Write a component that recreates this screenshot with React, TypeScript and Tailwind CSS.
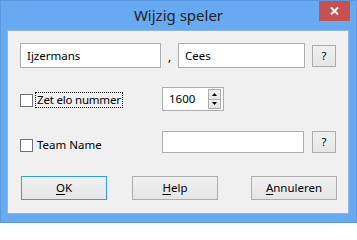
import React from "react";

const font = { fontFamily: '"Noto Sans", "Segoe UI", Arial, sans-serif' };

const Field: React.FC<{ value?: string; className?: string }> = ({ value, className }) => (
  <div className={"flex items-center border border-[#abadb3] bg-white pl-[6px] text-[11.5px] text-black " + (className ?? "")}>
    {value}
  </div>
);

const QButton: React.FC = () => (
  <div className="flex h-[22px] w-[24px] items-center justify-center border border-[#acacac] bg-gradient-to-b from-[#f0f0f0] to-[#e5e5e5] text-[11.5px] text-black">
    ?
  </div>
);

const Checkbox: React.FC = () => (
  <div className="h-[13px] w-[13px] shrink-0 border border-[#707070] bg-white" />
);

const DlgButton: React.FC<{ label: string; mnemonic: string; focused?: boolean; className?: string }> = ({
  label,
  mnemonic,
  focused,
  className,
}) => (
  <div
    className={
      "flex h-[24px] w-[86px] items-center justify-center border bg-gradient-to-b from-[#f0f0f0] to-[#e5e5e5] text-[11.5px] text-black " +
      (focused ? "border-[#3399ff] " : "border-[#acacac] ") +
      (className ?? "")
    }
  >
    <span className="underline underline-offset-2">{mnemonic}</span>
    {label}
  </div>
);

export default function App() {
  return (
    <div
      className="flex h-[223px] w-[357px] flex-col border border-[#5a98e0] bg-[#68aaf2]"
      style={font}
    >
      {/* title bar */}
      <div className="relative flex h-[29px] items-center justify-center">
        <span className="text-[15px] text-[#222]">Wijzig speler</span>
        <div className="absolute right-[6px] top-0 flex h-[20px] w-[31px] items-center justify-center bg-[#c75050]">
          <svg width="9" height="8" viewBox="0 0 9 8">
            <path d="M1 0.5 L8 7.5 M8 0.5 L1 7.5" stroke="white" strokeWidth="2" />
          </svg>
        </div>
      </div>

      {/* client area */}
      <div className="mb-[8px] ml-[6px] mr-[7px] flex flex-1 flex-col border border-[#8db6e4] bg-[#f0f0f0]">
        {/* name row */}
        <div className="mt-[12px] flex h-[25px] items-center pl-[12px]">
          <Field value="Ijzermans" className="h-[25px] w-[141px]" />
          <div className="flex h-full w-[17px] items-end justify-center pb-[2px] text-[12px] text-black">,</div>
          <Field value="Cees" className="h-[25px] w-[127px]" />
          <div className="ml-[7px]">
            <QButton />
          </div>
        </div>

        {/* elo row */}
        <div className="mt-[19px] flex h-[24px] items-center pl-[12px]">
          <div className="mt-[2px]">
            <Checkbox />
          </div>
          <div className="ml-[2px] mt-[2px] flex h-[16px] w-[88px] items-center whitespace-nowrap border border-dotted border-black pl-[1px] text-[11.5px] tracking-[-0.2px] text-black">
            Zet elo nummer
          </div>
          <div className="ml-[39px] flex h-[24px] w-[62px] items-center border border-[#abadb3] bg-white">
            <span className="flex-1 pl-[6px] text-[11.5px] text-black">1600</span>
            <div className="mr-[2px] flex h-[20px] w-[13px] flex-col">
              <div className="flex flex-1 items-center justify-center border border-[#acacac] bg-gradient-to-b from-[#f0f0f0] to-[#e5e5e5]">
                <svg width="5" height="3" viewBox="0 0 5 3">
                  <path d="M0 3 L2.5 0 L5 3 Z" fill="black" />
                </svg>
              </div>
              <div className="flex flex-1 items-center justify-center border border-t-0 border-[#acacac] bg-gradient-to-b from-[#f0f0f0] to-[#e5e5e5]">
                <svg width="5" height="3" viewBox="0 0 5 3">
                  <path d="M0 0 L5 0 L2.5 3 Z" fill="black" />
                </svg>
              </div>
            </div>
          </div>
        </div>

        {/* team row */}
        <div className="mt-[20px] flex h-[22px] items-center pl-[12px]">
          <div className="mt-[6px] flex items-center">
            <Checkbox />
            <span className="ml-[4px] w-[125px] whitespace-nowrap text-[11.5px] text-black">Team Name</span>
          </div>
          <Field className="h-[22px] w-[142px]" />
          <div className="ml-[8px]">
            <QButton />
          </div>
        </div>

        {/* buttons */}
        <div className="mt-[23px] flex items-center pl-[13px]">
          <DlgButton mnemonic="O" label="K" focused />
          <DlgButton mnemonic="H" label="elp" className="ml-[25px]" />
          <DlgButton mnemonic="A" label="nnuleren" className="ml-[33px]" />
        </div>
      </div>
    </div>
  );
}
